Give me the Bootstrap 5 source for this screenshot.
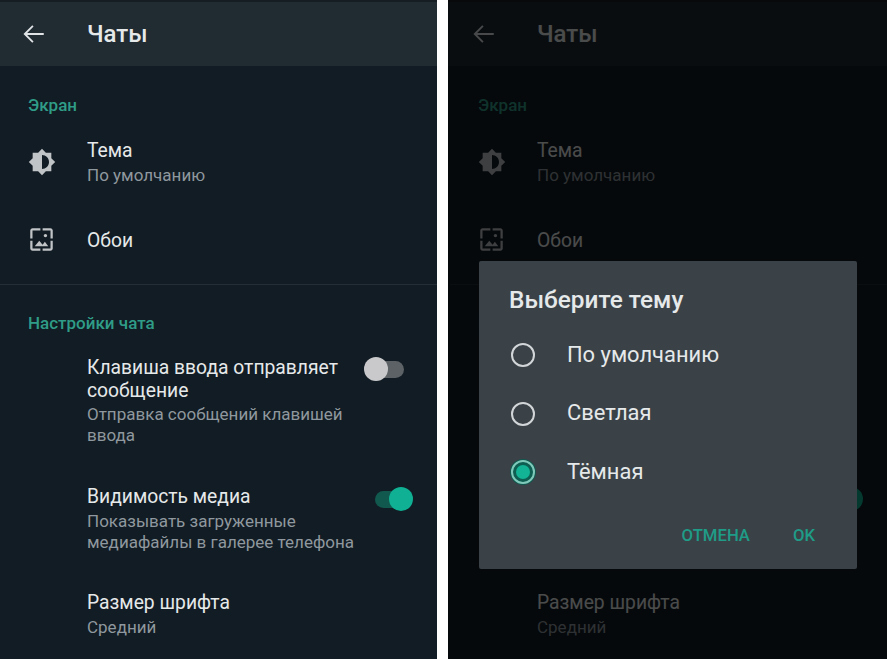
<!DOCTYPE html>
<html lang="ru">
<head>
    <meta charset="UTF-8">
    <title>Чаты</title>
    <link href="https://cdn.jsdelivr.net/npm/bootstrap@5.3.3/dist/css/bootstrap.min.css" rel="stylesheet">
    <style>
        html, body { height: 100%; }
        body { background: #fff; font-family: Roboto, "Liberation Sans", sans-serif; overflow: hidden; }
        .shot { height: 659px; gap: 11px; }
        .pane { background: #121c24; color: #e9edef; overflow: hidden; height: 659px; }
        .pane-left { width: 437px; }
        .pane-right { width: 439px; }
        .pane-right .pane-inner { margin-left: 2px; }
        .pane-top { height: 66px; background: #202b32; border-top: 2px solid #161e24; padding-left: 21px; }
        .pane-top svg { width: 26px; height: 26px; margin-right: 40px; }
        .pane-title { font-size: 24px; font-weight: 500; color: #e6e9ea; }
        .group-name { font-size: 17px; line-height: 20px; font-weight: 500; color: #2f9c87; padding-left: 28px; }
        .group-one { padding-top: 29px; }
        .group-two { padding-top: 28px; }
        .set-row { display: flex; padding-left: 28px; padding-right: 22px; }
        .row-theme { padding-top: 24px; }
        .row-wall { padding-top: 43px; padding-bottom: 31px; }
        .row-enter { padding-top: 23px; }
        .row-media { padding-top: 39px; }
        .row-font { padding-top: 38px; }
        .ico-slot { width: 59px; flex: none; }
        .ico-slot svg { width: 28px; height: 28px; fill: #c0c4c6; }
        .row-wall .ico-slot svg { width: 27px; height: 27px; }
        .ico-theme { padding-top: 9px; }
        .ico-wall { margin-top: -3px; }
        .set-main { font-size: 19.3px; line-height: 24px; color: #e6e9ea; }
        .set-sub { font-size: 17px; line-height: 21px; color: #8f989e; margin-top: 2px; }
        .row-media .set-sub { margin-top: 3px; }
        .set-long { font-size: 19.3px; line-height: 23px; color: #e6e9ea; }
        .divide { border-top: 1px solid #242e36; }
        .sw { position: relative; display: block; width: 40px; height: 24px; flex: none; margin-left: auto; }
        .sw-off { margin-top: 1px; margin-right: 11px; }
        .sw-on { margin-top: 2px; margin-right: 0; }
        .sw i { position: absolute; display: block; }
        .sw-track { top: 4px; height: 17px; border-radius: 9px; }
        .sw-off .sw-track { left: 12px; width: 28px; background: #5d6266; }
        .sw-on .sw-track { left: 0; width: 32px; background: #11594f; }
        .sw-thumb { top: 0; width: 24px; height: 24px; border-radius: 50%; }
        .sw-off .sw-thumb { left: 0; background: #c9c9cb; }
        .sw-on .sw-thumb { left: 14px; background: #0fb093; }
        .veil { position: absolute; inset: 0; background: rgba(0, 0, 0, .68); }
        .theme-box { position: absolute; left: 31px; top: 261px; width: 378px; height: 308px; background: #3a4248; border-radius: 2px; padding: 24px 0 0 30px; }
        .theme-box h2 { font-size: 24.4px; line-height: 30px; font-weight: 500; color: #e6e9ea; margin-bottom: 25px; }
        .opt { display: flex; align-items: center; height: 30px; margin-bottom: 28.5px; font-size: 21.9px; color: #e6e9ea; }
        .dot { width: 24px; height: 24px; border-radius: 50%; border: 2px solid #d3d6d8; flex: none; margin-left: 2px; margin-right: 32px; position: relative; }
        .dot-on { border-color: #7fc9ba; background: #0e5e52; box-shadow: 0 0 0 1px #12584f; }
        .dot-on::after { content: ""; position: absolute; left: 3px; top: 3px; width: 14px; height: 14px; border-radius: 50%; background: #12b495; }
        .box-acts { position: absolute; right: 42px; bottom: 23px; gap: 43px; }
        .box-acts .btn { font-size: 16.7px; line-height: 20px; font-weight: 500; color: #1f9c87; padding: 0; border: 0; border-radius: 0; text-decoration: none; }
    </style>
</head>
<body>
    <div class="shot d-flex">
        <div class="pane pane-left position-relative">
            <div class="pane-top d-flex align-items-center">
                <svg viewBox="0 0 24 24" fill="none" stroke="#dfe3e5" stroke-width="1.7"><path d="M21 12H3.5M11 4.5 3.5 12l7.5 7.5"/></svg>
                <span class="pane-title">Чаты</span>
            </div>
            <div class="group-name group-one">Экран</div>
            <div class="set-row row-theme">
                <div class="ico-slot ico-theme"><svg viewBox="0 0 24 24"><path fill-rule="evenodd" d="M20 15.31 23.31 12 20 8.69V4h-4.69L12 .69 8.69 4H4v4.69L.69 12 4 15.31V20h4.69L12 23.31 15.31 20H20v-4.69zM12 18V6c3.31 0 6 2.69 6 6s-2.69 6-6 6z"/></svg></div>
                <div>
                    <div class="set-main">Тема</div>
                    <div class="set-sub">По умолчанию</div>
                </div>
            </div>
            <div class="set-row row-wall">
                <div class="ico-slot ico-wall"><svg viewBox="0 0 24 24"><path d="M4 4h7V2H4c-1.1 0-2 .9-2 2v7h2V4zm6 9-4 5h12l-3-4-2.03 2.71L10 13zm7-4.5c0-.83-.67-1.5-1.5-1.5S14 7.67 14 8.5s.67 1.5 1.5 1.5S17 9.33 17 8.5zM20 2h-7v2h7v7h2V4c0-1.1-.9-2-2-2zm0 18h-7v2h7c1.1 0 2-.9 2-2v-7h-2v7zM4 13H2v7c0 1.1.9 2 2 2h7v-2H4v-7z"/></svg></div>
                <div class="set-main">Обои</div>
            </div>
            <div class="divide"></div>
            <div class="group-name group-two">Настройки чата</div>
            <div class="set-row row-enter">
                <div class="ico-slot"></div>
                <div>
                    <div class="set-long">Клавиша ввода отправляет<br>сообщение</div>
                    <div class="set-sub">Отправка сообщений клавишей<br>ввода</div>
                </div>
                <span class="sw sw-off"><i class="sw-track"></i><i class="sw-thumb"></i></span>
            </div>
            <div class="set-row row-media">
                <div class="ico-slot"></div>
                <div>
                    <div class="set-long">Видимость медиа</div>
                    <div class="set-sub">Показывать загруженные<br>медиафайлы в галерее телефона</div>
                </div>
                <span class="sw sw-on"><i class="sw-track"></i><i class="sw-thumb"></i></span>
            </div>
            <div class="set-row row-font">
                <div class="ico-slot"></div>
                <div>
                    <div class="set-main">Размер шрифта</div>
                    <div class="set-sub">Средний</div>
                </div>
            </div>
        </div>
        <div class="pane pane-right position-relative">
            <div class="pane-top d-flex align-items-center">
                <div class="pane-inner d-flex align-items-center">
                    <svg viewBox="0 0 24 24" fill="none" stroke="#dfe3e5" stroke-width="1.7"><path d="M21 12H3.5M11 4.5 3.5 12l7.5 7.5"/></svg>
                    <span class="pane-title">Чаты</span>
                </div>
            </div>
            <div class="pane-inner">
                <div class="group-name group-one">Экран</div>
                <div class="set-row row-theme">
                    <div class="ico-slot ico-theme"><svg viewBox="0 0 24 24"><path fill-rule="evenodd" d="M20 15.31 23.31 12 20 8.69V4h-4.69L12 .69 8.69 4H4v4.69L.69 12 4 15.31V20h4.69L12 23.31 15.31 20H20v-4.69zM12 18V6c3.31 0 6 2.69 6 6s-2.69 6-6 6z"/></svg></div>
                    <div>
                        <div class="set-main">Тема</div>
                        <div class="set-sub">По умолчанию</div>
                    </div>
                </div>
                <div class="set-row row-wall">
                    <div class="ico-slot ico-wall"><svg viewBox="0 0 24 24"><path d="M4 4h7V2H4c-1.1 0-2 .9-2 2v7h2V4zm6 9-4 5h12l-3-4-2.03 2.71L10 13zm7-4.5c0-.83-.67-1.5-1.5-1.5S14 7.67 14 8.5s.67 1.5 1.5 1.5S17 9.33 17 8.5zM20 2h-7v2h7v7h2V4c0-1.1-.9-2-2-2zm0 18h-7v2h7c1.1 0 2-.9 2-2v-7h-2v7zM4 13H2v7c0 1.1.9 2 2 2h7v-2H4v-7z"/></svg></div>
                    <div class="set-main">Обои</div>
                </div>
                <div class="divide"></div>
                <div class="group-name group-two">Настройки чата</div>
                <div class="set-row row-enter">
                    <div class="ico-slot"></div>
                    <div>
                        <div class="set-long">Клавиша ввода отправляет<br>сообщение</div>
                        <div class="set-sub">Отправка сообщений клавишей<br>ввода</div>
                    </div>
                    <span class="sw sw-off"><i class="sw-track"></i><i class="sw-thumb"></i></span>
                </div>
                <div class="set-row row-media">
                    <div class="ico-slot"></div>
                    <div>
                        <div class="set-long">Видимость медиа</div>
                        <div class="set-sub">Показывать загруженные<br>медиафайлы в галерее телефона</div>
                    </div>
                    <span class="sw sw-on"><i class="sw-track"></i><i class="sw-thumb"></i></span>
                </div>
                <div class="set-row row-font">
                    <div class="ico-slot"></div>
                    <div>
                        <div class="set-main">Размер шрифта</div>
                        <div class="set-sub">Средний</div>
                    </div>
                </div>
            </div>
            <div class="veil"></div>
            <div class="theme-box">
                <h2>Выберите тему</h2>
                <div class="opt"><span class="dot"></span>По умолчанию</div>
                <div class="opt"><span class="dot"></span>Светлая</div>
                <div class="opt"><span class="dot dot-on"></span>Тёмная</div>
                <div class="box-acts d-flex">
                    <button type="button" class="btn btn-link">ОТМЕНА</button>
                    <button type="button" class="btn btn-link">OK</button>
                </div>
            </div>
        </div>
    </div>
    <script src="https://cdn.jsdelivr.net/npm/bootstrap@5.3.3/dist/js/bootstrap.bundle.min.js"></script>
</body>
</html>
